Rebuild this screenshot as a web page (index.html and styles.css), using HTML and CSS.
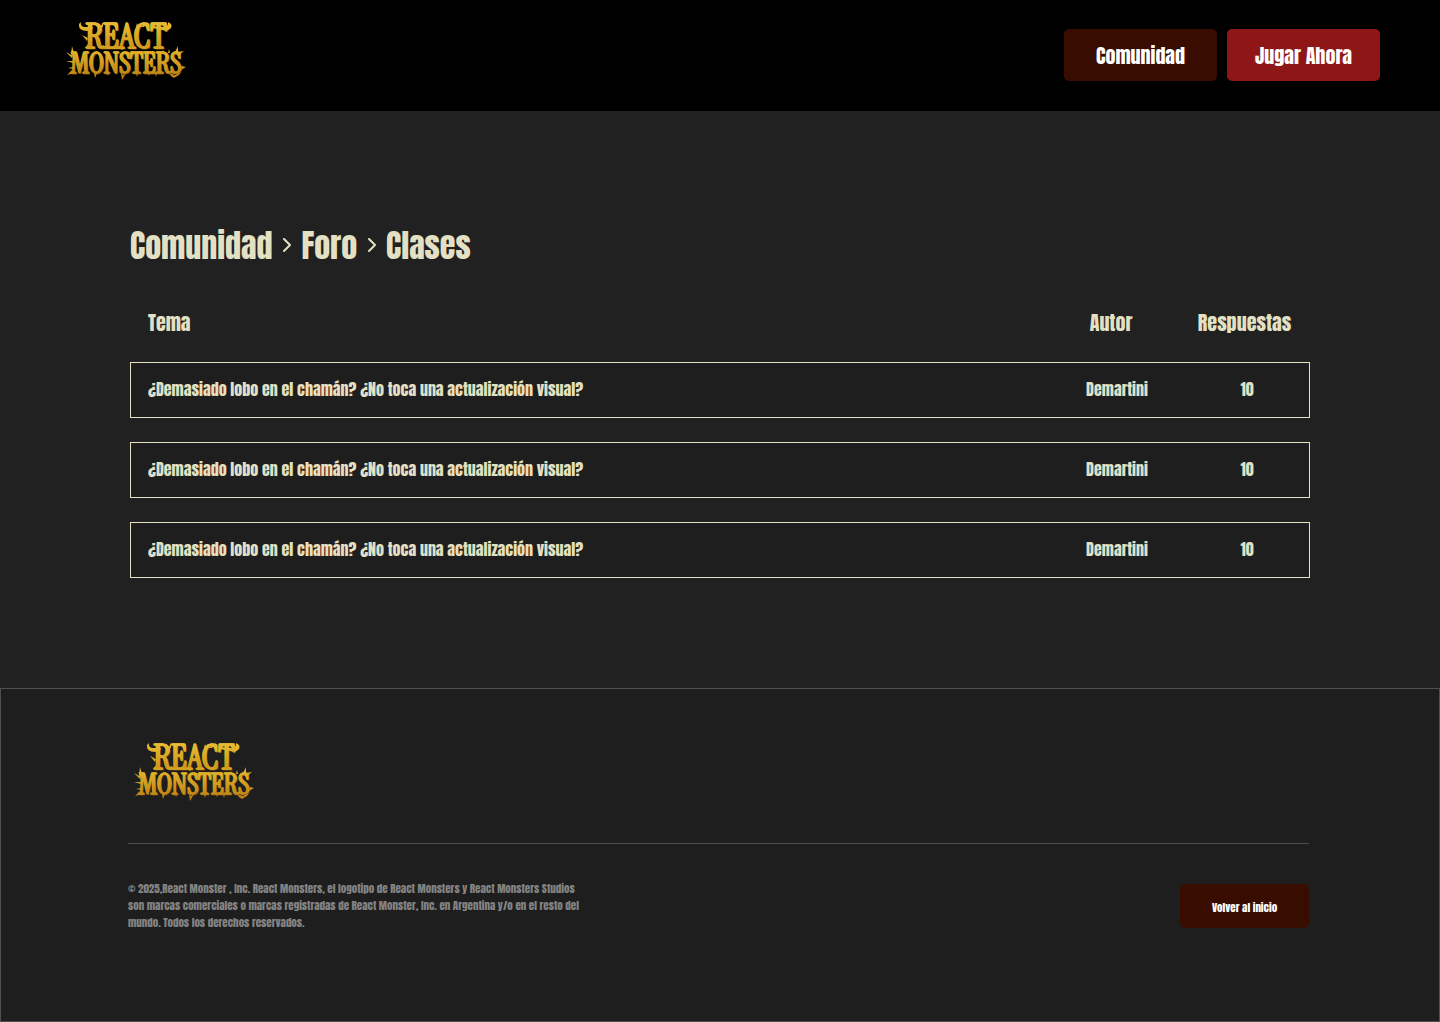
FILE: index.html
```html
<!DOCTYPE html>
<html lang="es">
<head>
<meta charset="utf-8">
<meta name="viewport" content="width=device-width, initial-scale=1">
<title>React Monsters - Foro</title>
<link rel="stylesheet" href="styles.css">
</head>
<body>
<svg width="0" height="0" class="defs" aria-hidden="true">
  <defs>
    <linearGradient id="gold" gradientUnits="userSpaceOnUse" x1="0" y1="7" x2="0" y2="64">
      <stop offset="0" stop-color="#e9bd34"/>
      <stop offset=".42" stop-color="#cd981c"/>
      <stop offset=".5" stop-color="#e2b42c"/>
      <stop offset="1" stop-color="#b87d12"/>
    </linearGradient>
    <symbol id="logo" viewBox="0 0 130 80">
      <g class="logo-shadow">
        <text x="67" y="34" text-anchor="middle" class="logo-top">REACT</text>
        <text x="67" y="59" text-anchor="middle" class="logo-bottom">MONSTERS</text>
      </g>
      <g fill="url(#gold)" stroke="url(#gold)" stroke-width=".6">
        <text x="66" y="33" text-anchor="middle" class="logo-top">REACT</text>
        <text x="66" y="58" text-anchor="middle" class="logo-bottom">MONSTERS</text>
      </g>
      <g fill="url(#gold)">
        <path d="M21 7Q20 11 24 12L33 12L32 15L27 16Q18 16 19 9Z"/>
        <path d="M92 11L103 12Q109 12 108 7Q113 9 111 13Q108 17 102 15L92 13Z"/>
        <path d="M40 13L38 9L41 11L43 7L43 12ZM76 12L77 8L78 11L82 8L80 12L88 7L84 12ZM22 20L28 23L27 26ZM25 33L28 29L30 33ZM60 33L62 35L64 33Z"/>
        <path d="M11 39L12 31L14 38L18 39L12 41ZM6 37L13 41L12 43ZM6 46L14 46L13 48ZM8 53L13 52L13 54ZM7 60L12 55L15 58Z"/>
        <path d="M34 58L35 63L37 58ZM47 58L48 61L49 58ZM61 58L63 60L66 58L62 65ZM76 58L77 62L78 58ZM88 58L89 61L90 58ZM95 58L96 62L97 58Z"/>
        <path d="M109 58L115 60L121 57L119 60L114 63L111 61ZM122 51L126 52L121 55ZM114 39L118 31L118 37L124 36L119 40ZM108 38L109 34L110 38ZM102 38L103 35L104 38Z"/>
      </g>
    </symbol>
    <symbol id="chevron" viewBox="0 0 11 16">
      <path d="M3 1L9 7L3 13" fill="none" stroke="currentColor" stroke-width="2" stroke-linecap="round" stroke-linejoin="round"/>
    </symbol>
  </defs>
</svg>

<header class="header">
  <a href="#" class="logo-link" aria-label="React Monsters"><svg class="logo"><use href="#logo"/></svg></a>
  <nav class="nav">
    <button type="button" class="btn btn-dark">Comunidad</button>
    <button type="button" class="btn btn-red">Jugar Ahora</button>
  </nav>
</header>

<main class="main">
  <nav class="breadcrumb" aria-label="Ruta">
    <a href="#">Comunidad</a>
    <svg class="chevron" aria-hidden="true"><use href="#chevron"/></svg>
    <a href="#">Foro</a>
    <svg class="chevron" aria-hidden="true"><use href="#chevron"/></svg>
    <a href="#">Clases</a>
  </nav>

  <table class="topics">
    <thead>
      <tr><th class="topic">Tema</th><th class="author">Autor</th><th class="replies">Respuestas</th></tr>
    </thead>
    <tbody>
      <tr><td>¿Demasiado lobo en el chamán? ¿No toca una actualización visual?</td><td>Demartini</td><td>10</td></tr>
      <tr><td>¿Demasiado lobo en el chamán? ¿No toca una actualización visual?</td><td>Demartini</td><td>10</td></tr>
      <tr><td>¿Demasiado lobo en el chamán? ¿No toca una actualización visual?</td><td>Demartini</td><td>10</td></tr>
    </tbody>
  </table>
</main>

<footer class="footer">
  <div class="footer-top">
    <a href="#" class="logo-link" aria-label="React Monsters"><svg class="logo"><use href="#logo"/></svg></a>
  </div>
  <div class="footer-bottom">
    <p class="legal">© 2025,React Monster , Inc. React Monsters, el logotipo de React Monsters y React Monsters Studios<br>son marcas comerciales o marcas registradas de React Monster, Inc. en Argentina y/o en el resto del<br>mundo. Todos los derechos reservados.</p>
    <button type="button" class="btn btn-dark btn-small">Volver al inicio</button>
  </div>
</footer>
</body>
</html>
```
FILE: styles.css
```css
* {
  box-sizing: border-box;
}

body {
  margin: 0;
  min-height: 100vh;
  display: flex;
  flex-direction: column;
  background: #212121;
  color: #e3e0c3;
  font-family: Anton, "Liberation Sans Narrow", "Liberation Sans", sans-serif;
  font-weight: 400;
}

a {
  color: inherit;
  text-decoration: none;
}

.defs {
  position: absolute;
}

.header {
  display: flex;
  align-items: center;
  justify-content: space-between;
  padding: 15px 60px 16px;
  background: #000;
}

.logo-link,
.logo {
  display: block;
}

.logo-link {
  width: 130px;
}

.logo {
  width: 130px;
  height: 80px;
  font-family: "Instrument Serif", "Liberation Serif", serif;
  font-weight: 700;
}

.logo-top {
  font-size: 35px;
}

.logo-bottom {
  font-size: 28px;
}

.logo-shadow {
  fill: #6b4208;
}

.nav {
  display: flex;
  gap: 10px;
}

.btn {
  width: 153px;
  height: 52px;
  padding: 0;
  border: 0;
  border-radius: 5px;
  color: #fff;
  font: inherit;
  font-size: 20px;
  cursor: pointer;
}

.btn-dark {
  background: #380d00;
}

.btn-red {
  background: #8e1616;
}

.btn-small {
  width: 129px;
  height: 44px;
  padding-top: 2px;
  font-size: 11px;
}

.main {
  padding: 111px 130px 86px;
}

.breadcrumb {
  display: flex;
  align-items: center;
  gap: 9px;
  font-size: 32px;
  line-height: 48px;
}

.chevron {
  width: 11px;
  height: 16px;
}

.topics {
  width: 100%;
  margin-top: 14px;
  border-collapse: separate;
  border-spacing: 0 24px;
  text-align: center;
}

.topics th {
  height: 30px;
  padding: 0 6px 0 0;
  font-size: 20px;
  font-weight: 400;
  line-height: 30px;
}

.topics .topic {
  padding-left: 18px;
  text-align: left;
}

.topics .author {
  width: 136px;
  padding-right: 12px;
}

.replies {
  width: 125px;
}

.topics td {
  height: 56px;
  padding: 0 0 2px;
  border: solid #e3e0c3;
  border-width: 1px 0;
  background: #1e1e1e;
  font-size: 16px;
  line-height: 24px;
}

.topics td:first-child {
  padding-left: 17px;
  border-left-width: 1px;
  text-align: left;
}

.topics td:last-child {
  border-right-width: 1px;
}

.footer {
  flex: 1;
  padding: 47px 130px 89px 127px;
  border: 1px solid #4f4f4f;
  background: #1e1e1e;
}

.footer-top {
  padding-bottom: 27px;
  border-bottom: 1px solid #4f4f4f;
}

.footer-bottom {
  display: flex;
  justify-content: space-between;
  align-items: flex-start;
  padding-top: 40px;
}

.legal {
  margin: -4px 0 0;
  color: #838383;
  font-size: 11px;
  line-height: 17px;
}
```
